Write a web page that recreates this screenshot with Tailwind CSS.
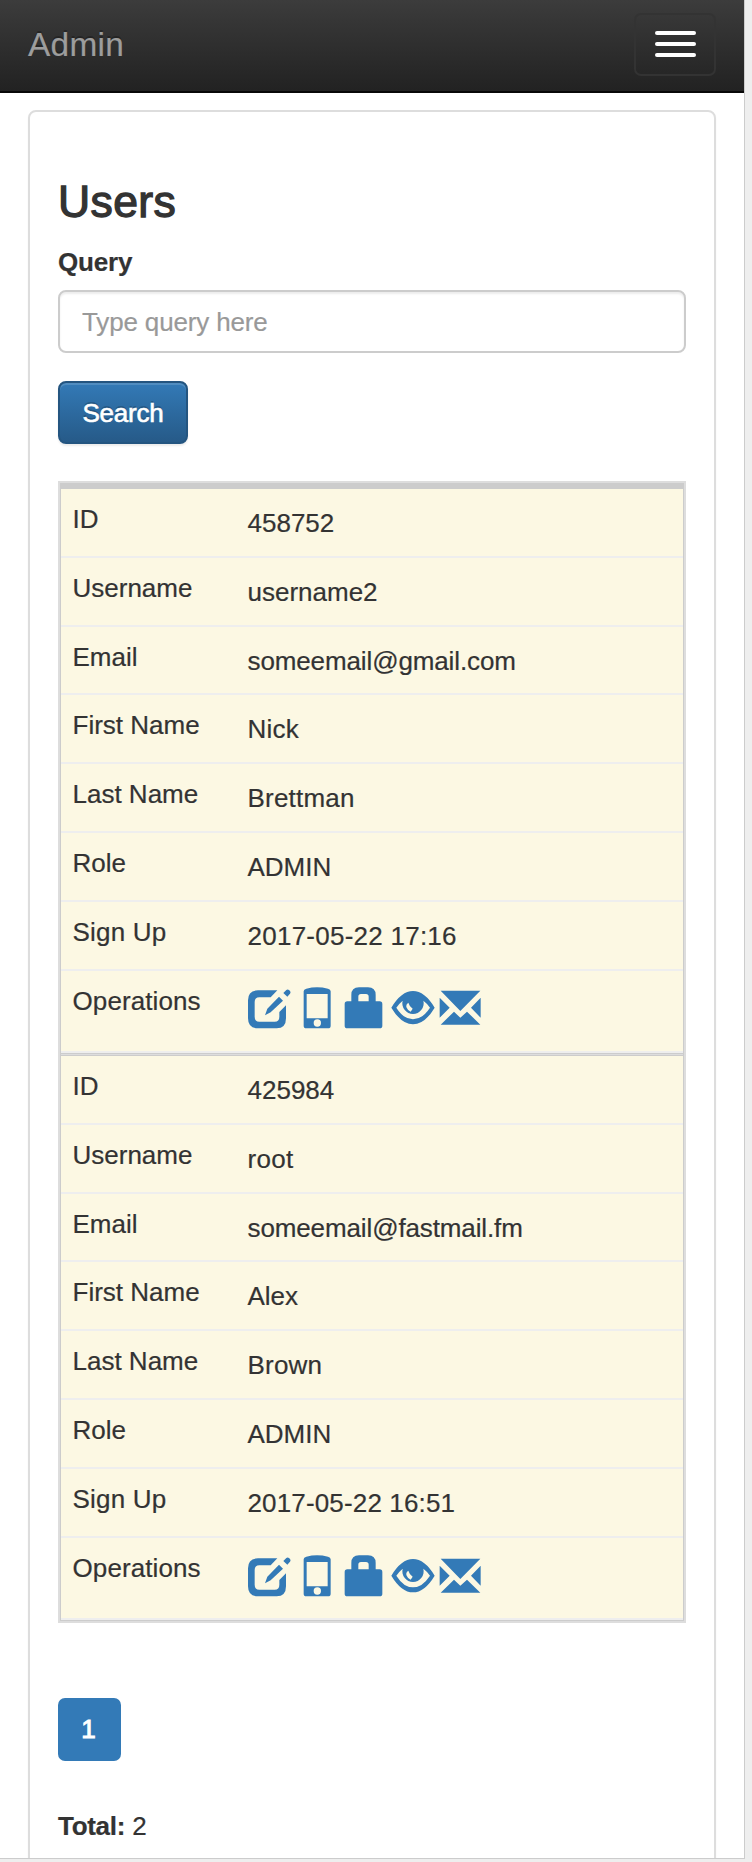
<!DOCTYPE html>
<html lang="en">
<head>
<meta charset="utf-8">
<title>Admin</title>
<script src="https://cdn.jsdelivr.net/npm/@tailwindcss/browser@4"></script>
</head>
<body class="h-[1862px] overflow-hidden bg-[#eee] font-['Liberation_Sans',Arial,sans-serif] text-[26px] leading-[37px] text-[#333] [-webkit-text-stroke-width:0.2px]">
<svg class="hidden">
  <symbol id="edit" viewBox="52 80 129 126"><path d="M82 90H140L120 111H86Q72 111 72 125V169Q72 184 86 184H132Q146 184 146 169V155L166 135V174Q166 204 138 204H82Q52 204 52 174V120Q52 90 82 90ZM145 109L157 121L120 156L103 165L110 145ZM158 98L167 89Q171 86 175 89L178 92Q181 96 178 100L170 109Z"/></symbol>
  <symbol id="phone" viewBox="217 80 84 126"><path fill-rule="evenodd" d="M219 93Q219 87 227 85Q259 77 292 85Q300 87 300 93V196Q300 204 292 204H227Q219 204 219 196ZM228 101V174H291V101ZM249 188a11 11 0 1 0 22 0a11 11 0 1 0 -22 0Z"/></symbol>
  <symbol id="lock" viewBox="340 80 117 126"><path fill-rule="evenodd" d="M362 123V104Q362 81 385 81H412Q435 81 435 104V123H447Q455 123 455 131V196Q455 204 447 204H350Q342 204 342 196V131Q342 123 350 123ZM383 123H414V109Q414 101 406 101H391Q383 101 383 109Z"/></symbol>
  <symbol id="eye" viewBox="482 80 132 126"><path fill-rule="evenodd" d="M483 142Q513 92 548 92Q583 92 613 142Q583 192 548 192Q513 192 483 142ZM517 121Q506 130 498 142Q520 177 548 177Q576 177 599 142Q590 129 579 121A32 32 0 1 1 517 121ZM534 127Q525 133 529 142Q533 151 541 154L547 145Q538 140 534 127Z"/></symbol>
  <symbol id="mail" viewBox="628 80 126 126"><path d="M633 91H752L692 152ZM630 112L660 142L630 172ZM753 112L724 142L753 172ZM633 193L673 154L692 172L712 154L752 193Z"/></symbol>
</svg>
<div class="h-[1859px] w-[745px] overflow-hidden border-r border-b border-[#ccc] bg-white">
  <nav class="flex h-[93px] items-start justify-between border-b-2 border-[#080808] bg-linear-to-b from-[#3c3c3c] to-[#222] pt-[13px] pr-7 pl-[28px]">
    <a class="pt-[13px] text-[33.4px] tracking-[0.3px] text-[#9d9d9d] [text-shadow:0_-2px_0_rgba(0,0,0,0.25)]">Admin</a>
    <button aria-label="Menu" class="flex h-[63px] w-[82px] flex-col items-center gap-[7px] rounded-[7px] border-2 border-[#333] pt-4">
      <span class="h-1 w-[41px] rounded-[2px] bg-white"></span>
      <span class="h-1 w-[41px] rounded-[2px] bg-white"></span>
      <span class="h-1 w-[41px] rounded-[2px] bg-white"></span>
    </button>
  </nav>
  <main class="mt-[17px] ml-7 h-[1900px] w-[688px] rounded-[8px] border-2 border-[#ddd] px-7 shadow-[0_2px_2px_rgba(0,0,0,0.05)]">
    <h3 class="mt-[65px] text-[44.5px] leading-[49px] tracking-[0.4px] [-webkit-text-stroke:1.3px_#333]">Users</h3>
    <label class="mt-[18px] block font-bold tracking-[-0.2px]">Query</label>
    <input type="text" placeholder="Type query here" class="mt-[9px] block h-[63px] w-full rounded-[8px] border-2 border-[#ccc] px-[22px] pt-px tracking-[-0.15px] shadow-[inset_0_2px_2px_rgba(0,0,0,0.075)] placeholder:text-[#999]">
    <button class="mt-7 block h-[63px] w-[130px] rounded-[8px] border-2 border-[#245580] bg-linear-to-b from-[#337ab7] to-[#265a88] pt-px tracking-[-0.2px] text-white shadow-[inset_0_2px_0_rgba(255,255,255,0.15),0_2px_2px_rgba(0,0,0,0.075)] [-webkit-text-stroke:0.6px_#fff] [text-shadow:0_-2px_0_rgba(0,0,0,0.2)]">Search</button>

    <section class="mt-[37px] border-2 border-[#ddd]">
      <div class="border-x border-t-[6px] border-b border-[#ccc] bg-[#fcf8e3]">
        <dl>
          <div class="flex h-[68.8px] border-b-2 border-[#eee] pl-[11.5px]"><dt class="w-[175px] pt-3">ID</dt><dd class="pt-4">458752</dd></div>
          <div class="flex h-[68.8px] border-b-2 border-[#eee] pl-[11.5px]"><dt class="w-[175px] pt-3">Username</dt><dd class="pt-4">username2</dd></div>
          <div class="flex h-[68.8px] border-b-2 border-[#eee] pl-[11.5px]"><dt class="w-[175px] pt-3">Email</dt><dd class="pt-4 tracking-[-0.12px]">someemail@gmail.com</dd></div>
          <div class="flex h-[68.8px] border-b-2 border-[#eee] pl-[11.5px]"><dt class="w-[175px] pt-3">First Name</dt><dd class="pt-4 tracking-[0.2px]">Nick</dd></div>
          <div class="flex h-[68.8px] border-b-2 border-[#eee] pl-[11.5px]"><dt class="w-[175px] pt-3">Last Name</dt><dd class="pt-4 tracking-[0.2px]">Brettman</dd></div>
          <div class="flex h-[68.8px] border-b-2 border-[#eee] pl-[11.5px]"><dt class="w-[175px] pt-3">Role</dt><dd class="pt-4">ADMIN</dd></div>
          <div class="flex h-[68.8px] border-b-2 border-[#eee] pl-[11.5px]"><dt class="w-[175px] pt-3 tracking-[0.2px]">Sign Up</dt><dd class="pt-4 tracking-[0.25px]">2017-05-22 17:16</dd></div>
          <div class="flex h-[82.4px] border-b-2 border-[#eee] pl-[11.5px]"><dt class="w-[175px] pt-3 tracking-[0.1px]">Operations</dt>
            <dd class="flex items-start pt-4 text-[#337ab7]">
              <svg class="h-[42px] w-[43px] fill-current"><use href="#edit"/></svg>
              <svg class="ml-3 h-[42px] w-7 fill-current"><use href="#phone"/></svg>
              <svg class="ml-[13px] h-[42px] w-[39px] fill-current"><use href="#lock"/></svg>
              <svg class="ml-[8.4px] h-[42px] w-11 fill-current"><use href="#eye"/></svg>
              <svg class="ml-[4.6px] h-[42px] w-[42px] fill-current"><use href="#mail"/></svg>
            </dd></div>
        </dl>
        <dl class="border-t border-[#ccc]">
          <div class="h-[2px] border-b border-[#ccc] bg-[#ddd]"></div>
          <div class="flex h-[68.8px] border-b-2 border-[#eee] pl-[11.5px]"><dt class="w-[175px] pt-3">ID</dt><dd class="pt-4">425984</dd></div>
          <div class="flex h-[68.8px] border-b-2 border-[#eee] pl-[11.5px]"><dt class="w-[175px] pt-3">Username</dt><dd class="pt-4 tracking-[0.3px]">root</dd></div>
          <div class="flex h-[68.8px] border-b-2 border-[#eee] pl-[11.5px]"><dt class="w-[175px] pt-3">Email</dt><dd class="pt-4 tracking-[-0.12px]">someemail@fastmail.fm</dd></div>
          <div class="flex h-[68.8px] border-b-2 border-[#eee] pl-[11.5px]"><dt class="w-[175px] pt-3">First Name</dt><dd class="pt-4">Alex</dd></div>
          <div class="flex h-[68.8px] border-b-2 border-[#eee] pl-[11.5px]"><dt class="w-[175px] pt-3">Last Name</dt><dd class="pt-4 tracking-[0.2px]">Brown</dd></div>
          <div class="flex h-[68.8px] border-b-2 border-[#eee] pl-[11.5px]"><dt class="w-[175px] pt-3">Role</dt><dd class="pt-4">ADMIN</dd></div>
          <div class="flex h-[68.8px] border-b-2 border-[#eee] pl-[11.5px]"><dt class="w-[175px] pt-3 tracking-[0.2px]">Sign Up</dt><dd class="pt-4 tracking-[0.15px]">2017-05-22 16:51</dd></div>
          <div class="flex h-[82.4px] border-b-2 border-[#eee] pl-[11.5px]"><dt class="w-[175px] pt-3 tracking-[0.1px]">Operations</dt>
            <dd class="flex items-start pt-[17px] text-[#337ab7]">
              <svg class="h-[42px] w-[43px] fill-current"><use href="#edit"/></svg>
              <svg class="ml-3 h-[42px] w-7 fill-current"><use href="#phone"/></svg>
              <svg class="ml-[13px] h-[42px] w-[39px] fill-current"><use href="#lock"/></svg>
              <svg class="ml-[8.4px] h-[42px] w-11 fill-current"><use href="#eye"/></svg>
              <svg class="ml-[4.6px] h-[42px] w-[42px] fill-current"><use href="#mail"/></svg>
            </dd></div>
        </dl>
      </div>
    </section>

    <nav class="mt-[75px] flex h-[63px] w-[63px] items-center justify-center rounded-[7px] bg-[#337ab7] pr-[2px] pt-px text-white [-webkit-text-stroke:1px_#fff]">1</nav>
    <p class="mt-[47px]"><b class="tracking-[-0.3px]">Total:</b> 2</p>
  </main>
</div>
</body>
</html>
